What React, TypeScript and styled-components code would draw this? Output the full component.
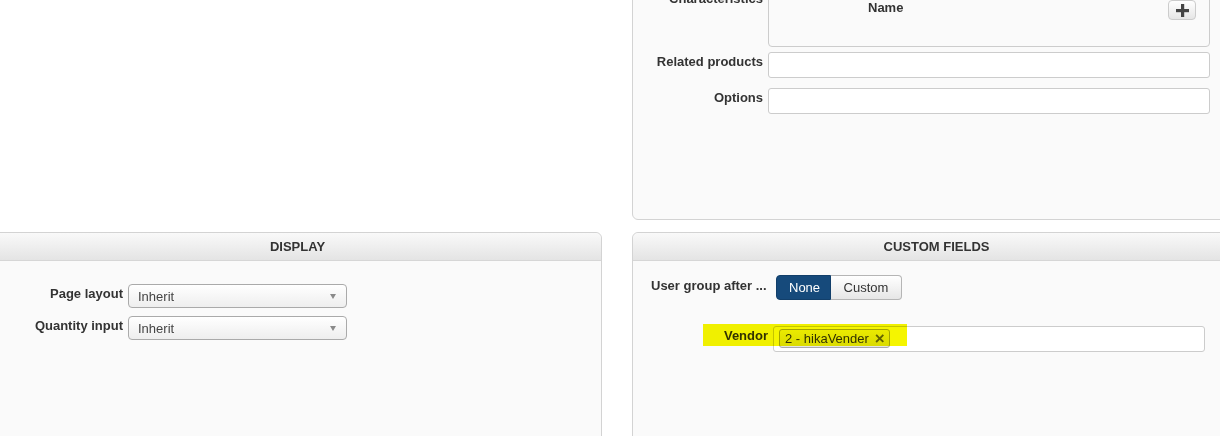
import React from 'react';
import styled, { createGlobalStyle } from 'styled-components';

const GlobalStyle = createGlobalStyle`
	html, body {
		margin: 0;
		background: #ffffff;
		overflow: hidden;
	}
	body {
		font-family: "Liberation Sans", Arial, Helvetica, sans-serif;
		font-size: 13px;
		color: #333333;
	}
`;

const Page = styled.div`
	display: grid;
	grid-template-columns: 609px 609px;
	column-gap: 30px;
	row-gap: 12px;
	margin: -24px 0 0 -7px;
`;

const Panel = styled.section<{ $top?: boolean }>`
	box-sizing: border-box;
	background: #fafafa;
	border: 1px solid #d3d3d3;
	border-radius: ${(p) => (p.$top ? '0 0 6px 6px' : '6px 6px 0 0')};
	height: ${(p) => (p.$top ? '244px' : '220px')};
	padding-top: ${(p) => (p.$top ? '10px' : '0')};
`;

const PanelHeader = styled.h3`
	margin: 0;
	height: 27px;
	line-height: 27px;
	text-align: center;
	font-size: 13px;
	font-weight: bold;
	color: #333333;
	text-transform: uppercase;
	background: linear-gradient(#f9f9f9, #e4e4e4);
	border-bottom: 1px solid #d6d6d6;
	border-radius: 6px 6px 0 0;
`;

const PanelBody = styled.div<{ $pad: number }>`
	padding-top: ${(p) => p.$pad}px;
`;

const Row = styled.div<{ $gap?: number; $mb?: number }>`
	position: relative;
	display: flex;
	align-items: flex-start;
	column-gap: ${(p) => p.$gap ?? 5}px;
	margin-bottom: ${(p) => p.$mb ?? 0}px;
`;

const Label = styled.label<{ $width: number; $left?: boolean; $pt?: number; $pl?: number }>`
	flex: none;
	box-sizing: border-box;
	width: ${(p) => p.$width}px;
	padding-top: ${(p) => p.$pt ?? 2}px;
	padding-left: ${(p) => p.$pl ?? 0}px;
	font-weight: bold;
	line-height: 15px;
	text-align: ${(p) => (p.$left ? 'left' : 'right')};
	white-space: nowrap;
	color: #333333;
`;

const TextInput = styled.div<{ $width: number }>`
	box-sizing: border-box;
	width: ${(p) => p.$width}px;
	height: 26px;
	background: #ffffff;
	border: 1px solid #cccccc;
	border-radius: 3px;
	padding: 2px 5px;
`;

const ListBox = styled.div`
	box-sizing: border-box;
	width: 442px;
	height: 60px;
	background: #fafafa;
	border: 1px solid #cccccc;
	border-radius: 4px;
	padding: 13px 13px 0 99px;
	display: flex;
	justify-content: space-between;
	align-items: flex-start;
`;

const ColumnTitle = styled.span`
	font-weight: bold;
	line-height: 15px;
	margin-top: -1px;
`;

const AddButton = styled.button`
	box-sizing: border-box;
	width: 28px;
	height: 20px;
	margin-top: -1px;
	padding: 0;
	display: flex;
	align-items: center;
	justify-content: center;
	background: linear-gradient(#ffffff, #e6e6e6);
	border: 1px solid #cccccc;
	border-radius: 4px;
`;

const FakeSelect = styled.div`
	box-sizing: border-box;
	width: 219px;
	height: 24px;
	display: flex;
	align-items: center;
	justify-content: space-between;
	padding: 1px 10px 0 9px;
	background: linear-gradient(#ffffff, #eeeeee);
	border: 1px solid #aaaaaa;
	border-radius: 4px;
	color: #444444;
	line-height: 15px;
`;

const Caret = styled.span`
	width: 0;
	height: 0;
	border-left: 3px solid transparent;
	border-right: 3px solid transparent;
	border-top: 5px solid #8a8a8a;
`;

const DisplayBody = styled.div`
	display: flex;
	flex-direction: column;
	row-gap: 8px;
`;

const Toggle = styled.div`
	display: flex;
`;

const ToggleButton = styled.button<{ $active?: boolean }>`
	box-sizing: border-box;
	height: 25px;
	padding: 0 12px;
	font-family: inherit;
	font-size: 13px;
	line-height: 15px;
	color: ${(p) => (p.$active ? '#ffffff' : '#333333')};
	background: ${(p) => (p.$active ? '#164a7b' : 'linear-gradient(#ffffff, #e6e6e6)')};
	border: 1px solid ${(p) => (p.$active ? '#123f6a' : '#b5b5b5')};
	border-radius: ${(p) => (p.$active ? '4px 0 0 4px' : '0 4px 4px 0')};
	border-left-width: ${(p) => (p.$active ? '1px' : '0')};
	width: ${(p) => (p.$active ? '55px' : '71px')};
`;

const Tag = styled.span`
	box-sizing: border-box;
	display: inline-flex;
	align-items: center;
	height: 19px;
	padding: 0 4px 0 5px;
	column-gap: 6px;
	background: linear-gradient(#f4f4f4, #e3e3e3);
	border: 1px solid #aaaaaa;
	border-radius: 3px;
	color: #333333;
	line-height: 15px;
`;

const TagClose = styled.span`
	font-size: 17px;
	font-weight: bold;
	color: #666666;
	line-height: 15px;
`;

// marker stroke drawn over the vendor row
const Highlight = styled.div`
	position: absolute;
	left: 70px;
	top: -2px;
	width: 204px;
	height: 22px;
	background: #f5f500;
	mix-blend-mode: multiply;
	pointer-events: none;
`;

const PlusIcon = () => (
	<svg width="13" height="13" viewBox="0 0 13 13">
		<rect x="5" y="0" width="3.2" height="13" fill="#444" />
		<rect x="0" y="5" width="13" height="3.2" fill="#444" />
	</svg>
);

export default function App() {
	return (
		<>
			<GlobalStyle />
			<Page>
				<div />
				<Panel $top>
					<Row $mb={5}>
						<Label $width={130} $pt={4}>
							Characteristics
						</Label>
						<ListBox>
							<ColumnTitle>Name</ColumnTitle>
							<AddButton>
								<PlusIcon />
							</AddButton>
						</ListBox>
					</Row>
					<Row $mb={10}>
						<Label $width={130}>Related products</Label>
						<TextInput $width={442} />
					</Row>
					<Row>
						<Label $width={130}>Options</Label>
						<TextInput $width={442} />
					</Row>
				</Panel>

				<Panel>
					<PanelHeader>Display</PanelHeader>
					<PanelBody $pad={23}>
						<DisplayBody>
							<Row>
								<Label $width={129}>Page layout</Label>
								<FakeSelect>
									<span>Inherit</span>
									<Caret />
								</FakeSelect>
							</Row>
							<Row>
								<Label $width={129}>Quantity input</Label>
								<FakeSelect>
									<span>Inherit</span>
									<Caret />
								</FakeSelect>
							</Row>
						</DisplayBody>
					</PanelBody>
				</Panel>

				<Panel>
					<PanelHeader>Custom fields</PanelHeader>
					<PanelBody $pad={14}>
						<Row $gap={9} $mb={26}>
							<Label $width={134} $left $pt={3} $pl={18}>
								User group after ...
							</Label>
							<Toggle>
								<ToggleButton $active>None</ToggleButton>
								<ToggleButton>Custom</ToggleButton>
							</Toggle>
						</Row>
						<Row>
							<Label $width={135}>Vendor</Label>
							<TextInput $width={432}>
								<Tag>
									2 - hikaVender
									<TagClose>×</TagClose>
								</Tag>
							</TextInput>
							<Highlight />
						</Row>
					</PanelBody>
				</Panel>
			</Page>
		</>
	);
}
